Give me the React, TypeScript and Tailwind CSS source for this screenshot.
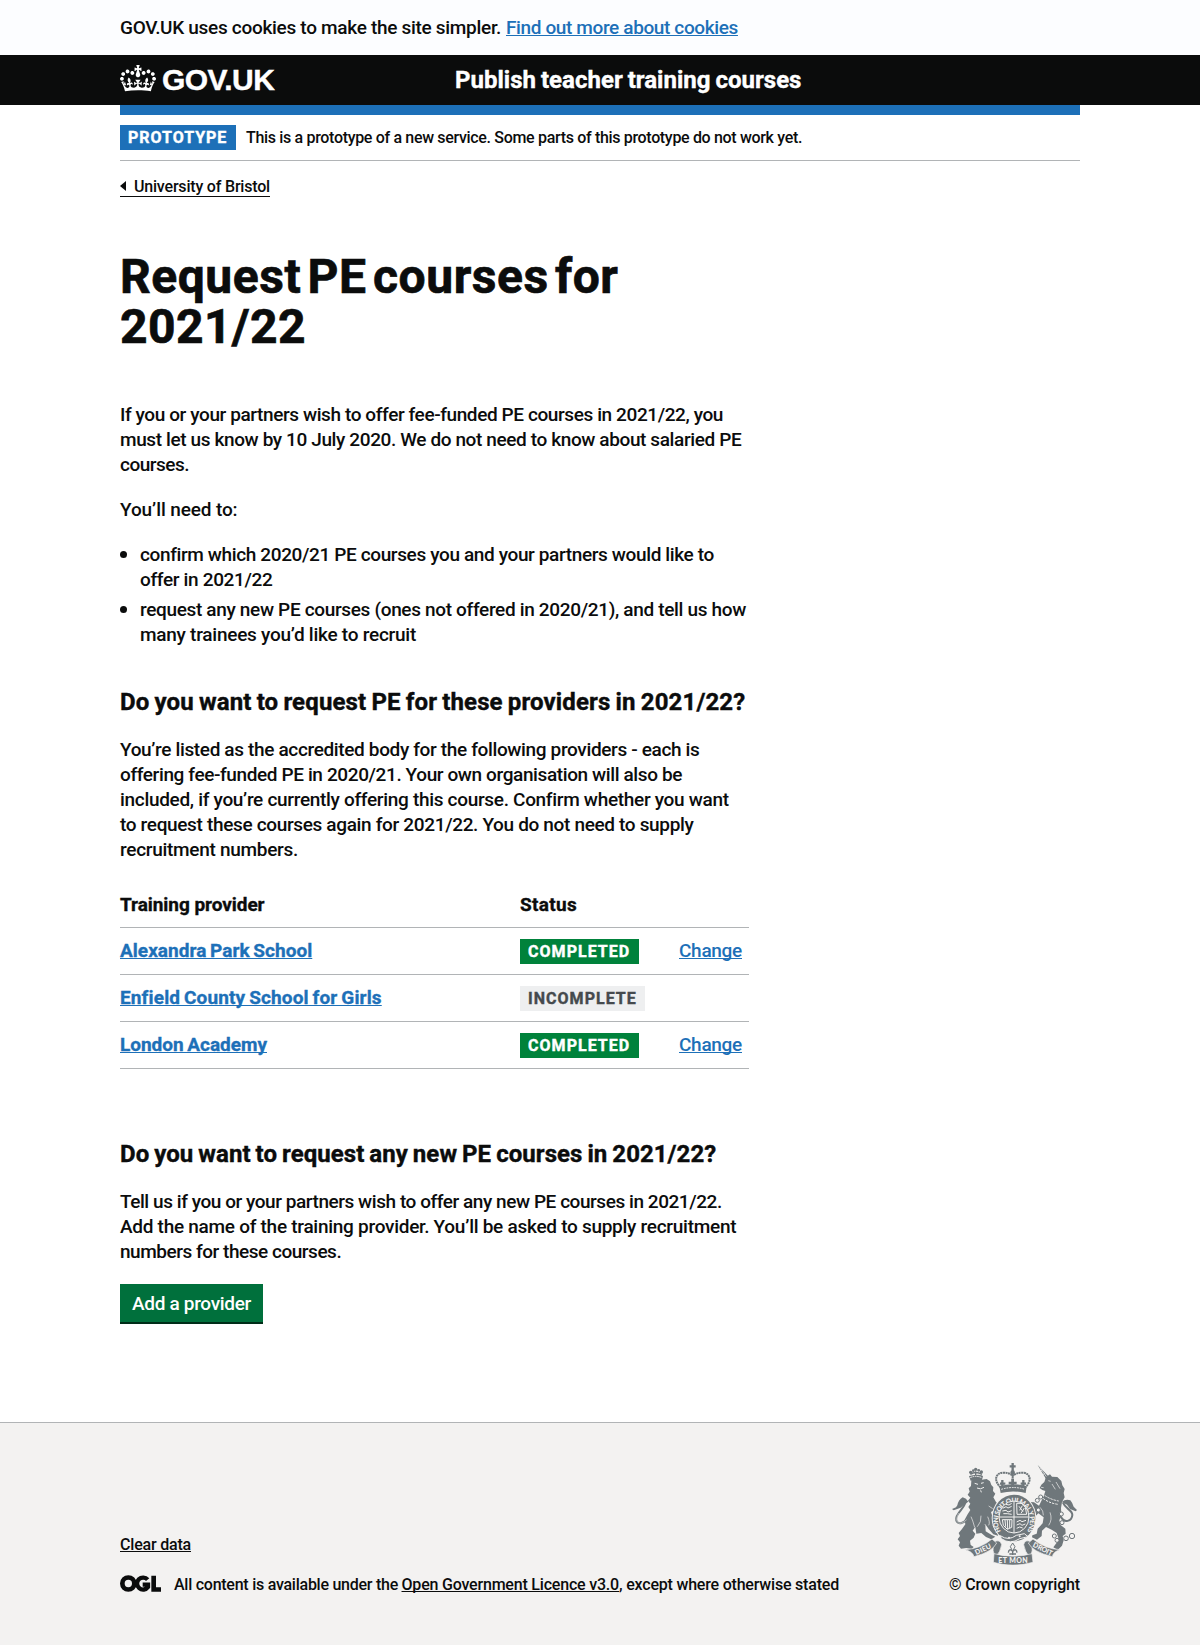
import type { ReactNode } from "react";

type Line = { text: string; tracking: string };

function Lines({ lines }: { lines: Line[] }) {
  return (
    <>
      {lines.map((line) => (
        <span key={line.text} className={`block whitespace-nowrap ${line.tracking}`}>
          {line.text}
        </span>
      ))}
    </>
  );
}

function Link({ children, className }: { children: ReactNode; className: string }) {
  return (
    <a
      href="#"
      className={`whitespace-nowrap underline decoration-1 underline-offset-1 [text-decoration-skip-ink:none] ${className}`}
    >
      {children}
    </a>
  );
}

function Crown() {
  return (
    <svg viewBox="0 0 132 97" className="h-[26.5px] w-9 fill-white" aria-hidden="true">
      <path d="M25 30.2c3.5 1.5 7.7-.2 9.1-3.7 1.5-3.6-.2-7.8-3.9-9.2-3.6-1.4-7.6.3-9.1 3.9-1.4 3.5.3 7.5 3.9 9zM9 39.5c3.6 1.5 7.8-.2 9.2-3.7 1.5-3.6-.2-7.8-3.9-9.1-3.6-1.5-7.6.2-9.1 3.8-1.4 3.5.3 7.5 3.8 9zM4.4 57.2c3.5 1.5 7.7-.2 9.1-3.8 1.5-3.6-.2-7.7-3.9-9.1-3.5-1.5-7.6.3-9.1 3.8-1.4 3.5.3 7.6 3.9 9.1zm38.3-21.4c3.5 1.5 7.7-.2 9.1-3.8 1.5-3.6-.2-7.7-3.9-9.1-3.6-1.5-7.6.3-9.1 3.8-1.3 3.6.4 7.7 3.9 9.1zm64.4-5.6c-3.6 1.5-7.8-.2-9.1-3.7-1.5-3.6.2-7.8 3.8-9.2 3.6-1.4 7.7.3 9.2 3.9 1.3 3.5-.4 7.5-3.9 9zm15.9 9.3c-3.6 1.5-7.7-.2-9.1-3.7-1.5-3.6.2-7.8 3.7-9.1 3.6-1.5 7.7.2 9.2 3.8 1.5 3.5-.3 7.5-3.8 9zm4.7 17.7c-3.6 1.5-7.8-.2-9.2-3.8-1.5-3.6.2-7.7 3.9-9.1 3.6-1.5 7.7.3 9.2 3.8 1.3 3.5-.4 7.6-3.9 9.1zM89.3 35.8c-3.6 1.5-7.8-.2-9.2-3.8-1.4-3.6.2-7.7 3.9-9.1 3.6-1.5 7.7.3 9.2 3.8 1.4 3.6-.3 7.7-3.9 9.1zM69.7 17.7l8.9 4.7V9.3l-8.9 2.8c-.2-.3-.5-.6-.9-.9L72.4 0H59.6l3.5 11.2c-.3.3-.6.5-.9.9l-8.8-2.8v13.1l8.8-4.7c.3.3.6.7.9.9l-5 15.4v.1c-.2.8-.4 1.6-.4 2.4 0 4.1 3.1 7.5 7 8.1h.2c.3 0 .7.1 1 .1.4 0 .7 0 1-.1h.2c4-.6 7.1-4.1 7.1-8.1 0-.8-.1-1.7-.4-2.4V34l-5.1-15.4c.4-.2.7-.6 1-.9zM66 92.8c16.9 0 32.8 1.1 47.1 3.2 4-16.9 8.9-26.7 14-33.5l-9.6-3.4c1 4.9 1.1 7.2 0 10.2-1.5-1.4-3-4.3-4.2-8.7L108.6 76c2.8-2 5-3.2 7.5-3.3-4.4 9.4-10 11.9-13.6 11.2-4.3-.8-6.3-4.6-5.6-7.9 1-4.7 5.7-5.9 8-.5 4.3-8.7-3-11.4-7.6-8.8 7.1-7.2 7.9-13.5 2.1-21.1-8 6.1-8.1 12.3-4.5 20.8-4.7-5.4-12.1-2.5-9.5 6.2 3.4-5.2 7.9-2 7.2 3.1-.6 4.3-6.4 7.8-13.5 7.2-10.3-.9-10.9-8-11.2-13.8 2.5-.5 7.1 1.8 11 7.3L80.2 60c-4.1 4.4-8 5.3-12.3 5.4 1.4-4.4 8-11.6 8-11.6H55.5s6.4 7.2 7.9 11.6c-4.2-.1-8-1-12.3-5.4l1.4 16.4c3.9-5.5 8.5-7.7 10.9-7.3-.3 5.8-.9 12.8-11.1 13.8-7.2.6-12.9-2.9-13.5-7.2-.7-5 3.8-8.3 7.1-3.1 2.7-8.7-4.6-11.6-9.4-6.2 3.7-8.5 3.6-14.7-4.6-20.8-5.8 7.6-5 13.9 2.2 21.1-4.7-2.6-11.9.1-7.7 8.8 2.3-5.5 7.1-4.2 8.1.5.7 3.3-1.3 7.1-5.7 7.9-3.5.7-9-1.8-13.5-11.2 2.5.1 4.7 1.3 7.5 3.3l-4.7-15.4c-1.2 4.4-2.7 7.2-4.3 8.7-1.1-3-.9-5.3 0-10.2l-9.5 3.4c5 6.9 9.9 16.7 14 33.5 14.8-2.1 30.8-3.2 47.7-3.2z" />
    </svg>
  );
}

function OglLogo() {
  return (
    <svg
      viewBox="0 0 123 51"
      className="h-[17px] w-[41px]"
      fill="none"
      stroke="#0b0c0c"
      strokeWidth="14"
      aria-label="Open Government Licence"
    >
      <circle cx="25" cy="25.5" r="18" />
      <path d="M83 14 A18 18 0 1 0 84 36 V29 H68" strokeWidth="13" />
      <path d="M101 2 V43.5 H123" />
    </svg>
  );
}

const INK = "#6f777b";
const PAPER = "#f3f2f1";

function Crest() {
  return (
    <svg viewBox="36 159 375 306" className="h-[102px] w-[125px]" aria-hidden="true">
      <defs>
        <path id="garter" d="M184 366 A48 55 0 1 1 260 366" />
      </defs>

      {/* Imperial crown */}
      <g fill="none" stroke={INK}>
        <path d="M218 159 V184 M209 169 H227" strokeWidth="7" />
        <circle cx="218" cy="188" r="7" fill={INK} stroke="none" />
        <path d="M182 232 C160 212 166 188 190 188 C206 188 214 193 218 198 C222 193 232 188 247 188 C271 188 277 212 256 232" strokeWidth="6" strokeDasharray="6 1.5" />
        <path d="M218 194 V228" strokeWidth="6" strokeDasharray="5 1.5" />
        <path d="M218 206 V232 M206 219 H230" strokeWidth="8" />
        <path d="M187 210 V234 M180 221 H196 M250 210 V234 M242 221 H258" strokeWidth="7" />
      </g>
      <path d="M178 229 Q219 216 260 229 L257 249 Q219 240 182 249 Z" fill={INK} />
      <path d="M184 238 Q219 227 255 238" fill="none" stroke={PAPER} strokeWidth="3" strokeDasharray="5 3" />

      {/* Lion */}
      <g fill={INK}>
        <path d="M92 212 L87 198 Q125 190 129 199 L125 212 Z" />
        <circle cx="107" cy="178" r="5" />
        <circle cx="92" cy="187" r="5" />
        <circle cx="124" cy="186" r="5" />
        <circle cx="100" cy="182" r="4" />
        <circle cx="116" cy="181" r="4" />
        <path d="M94 212 Q108 203 125 209 L140 207 L150 214 L154 225 L160 232 L159 243 L166 251 L160 262 L168 276 L178 286 L176 301 L167 309 L160 302 L153 306 L158 322 L164 336 L158 347 L166 358 L176 365 L174 377 L160 373 L146 357 L136 343 L121 347 L105 352 L98 362 L106 371 L101 383 L90 392 L92 405 L101 411 L95 417 L79 414 L63 416 L56 407 L60 397 L53 388 L60 378 L56 369 L66 357 L76 343 L74 329 L82 314 L91 300 L85 291 L91 281 L84 272 L91 263 L83 254 L89 245 L86 235 L93 228 Z" />
        <path d="M106 351 Q124 338 136 344 L137 364 L155 375 L166 380 L154 388 L138 381 L124 369 L109 371 Z" />
        <path d="M52 286 Q55 270 68 262 Q79 265 85 275 Q72 282 62 293 L41 301 L36 297 L48 292 Z" />
      </g>
      <path d="M91 193 Q107 182 126 193 M107 184 V197" fill="none" stroke={INK} strokeWidth="4" />
      <path d="M80 329 C53 354 40 331 56 309 C68 293 75 286 78 273" fill="none" stroke={INK} strokeWidth="6" />
      <path d="M80 329 C53 354 42 331 57 309" fill="none" stroke={PAPER} strokeWidth="1.5" />
      <g fill="none" stroke={PAPER} strokeWidth="3">
        <path d="M91 203 Q107 195 126 203" strokeDasharray="5 2" />
        <path d="M104 220 L114 223 M123 220 L131 218 M111 234 Q121 240 132 232 M122 241 L124 247" />
        <path d="M123 317 Q125 336 112 350 M143 320 Q151 338 146 346 M146 288 L158 296 M104 352 Q98 330 93 320" strokeWidth="2" />
      </g>

      {/* Unicorn */}
      <g fill={INK}>
        <path d="M293 165 L325 199 L318 207 Z" />
        <path d="M318 201 L330 193 L336 200 L352 201 L364 213 L367 226 L374 237 L371 249 L374 262 L366 276 L363 294 L364 316 L358 331 L362 345 L376 356 L377 371 L368 378 L371 391 L366 407 L353 420 L340 412 L350 398 L355 384 L350 369 L335 359 L318 351 L306 362 L305 378 L291 389 L276 382 L277 376 L290 371 L293 356 L308 340 L311 322 L295 310 L287 318 L275 302 L266 287 L270 276 L282 277 L297 287 L304 273 L311 259 L316 243 L307 240 L299 234 L304 224 L313 216 Z" />
        <path d="M365 276 Q377 266 391 271 Q397 278 401 290 L411 300 L407 304 L390 297 L381 284 Z" />
      </g>
      <path d="M360 315 C373 346 396 331 397 315 C398 300 376 297 369 278" fill="none" stroke={INK} strokeWidth="6" />
      <path d="M300 173 L319 200 M325 212 L332 214 M303 232 L311 233 M300 183 L306 181 M309 194 L315 190" fill="none" stroke={PAPER} strokeWidth="2" />
      <path d="M306 250 Q327 268 356 273 M302 259 Q323 279 354 283" fill="none" stroke={PAPER} strokeWidth="3" strokeDasharray="7 3" />
      <path d="M336 222 L346 238 M348 216 L360 236 M330 307 Q338 329 326 346 M300 292 Q311 302 310 316" fill="none" stroke={PAPER} strokeWidth="2" />
      <g fill={PAPER} stroke={INK} strokeWidth="3">
        <circle cx="302" cy="261" r="6" />
        <circle cx="292" cy="271" r="6" />
        <circle cx="295" cy="300" r="6" />
        <circle cx="364" cy="312" r="6" />
        <circle cx="366" cy="338" r="6" />
        <circle cx="343" cy="378" r="6" />
        <circle cx="351" cy="391" r="6" />
        <circle cx="378" cy="385" r="7" />
        <circle cx="396" cy="378" r="8" />
      </g>

      {/* Garter and shield */}
      <ellipse cx="222" cy="324" rx="67" ry="73" fill={PAPER} />
      <ellipse cx="222" cy="324" rx="64" ry="70" fill={INK} />
      <text fill={PAPER} className="font-[Lato] text-[20px] font-black">
        <textPath href="#garter" startOffset="2" textLength="238">HONI SOIT QUI MAL Y PENSE</textPath>
      </text>
      <ellipse cx="222" cy="321" rx="45" ry="48" fill={INK} stroke={PAPER} strokeWidth="3" />
      <path d="M176 321 H268 M222 273 V369" stroke={PAPER} strokeWidth="3" />
      <g fill="none" stroke={PAPER} strokeWidth="3">
        <path d="M188 295 L198 290 L204 294 L215 289 M187 303 L198 301 L204 306 L215 302 M190 311 L202 311 L215 313 M198 283 L207 285 L215 280" />
        <path d="M230 280 H246 L256 292 L260 313 H231 Z M237 289 L249 305 M247 287 L239 301 M253 294 L243 310" />
        <path d="M187 329 L190 346 L202 358 L215 352 L216 329 Z M195 330 L197 350 M202 330 L203 357 M209 330 V354" />
        <path d="M230 336 L240 331 L246 335 L258 331 M230 345 L240 341 L246 346 L256 342 M230 355 L239 351 L248 354" />
      </g>
      <path d="M181 377 Q205 394 229 376 L253 371 L264 380 L239 386 Q211 405 184 386 Z" fill={INK} stroke={PAPER} strokeWidth="3" />
      <circle cx="207" cy="383" r="3" fill={PAPER} />
      <circle cx="239" cy="379" r="3" fill={PAPER} />

      {/* Motto ribbon */}
      <g fill={INK} stroke={PAPER} strokeWidth="2">
        <path d="M163 395 Q180 387 185 404 Q181 426 168 440 Q153 425 163 395 Z" />
        <path d="M272 395 Q255 387 251 404 Q255 426 268 440 Q283 425 272 395 Z" />
        <path d="M74 419 Q121 417 156 387 L170 399 Q158 425 102 440 Q98 424 74 419 Z" />
        <path d="M361 419 Q314 417 279 387 L265 399 Q277 425 337 440 Q340 424 361 419 Z" />
        <path d="M162 431 Q218 446 276 431 L279 457 Q218 474 160 457 Z" />
      </g>
      <path d="M218 401 V435 M205 428 Q207 413 218 424 Q229 413 231 428 M208 432 H228" fill="none" stroke={INK} strokeWidth="4" />
      <path d="M218 399 L225 410 L218 424 L211 410 Z" fill={PAPER} stroke={INK} strokeWidth="3" />
      <g fill={PAPER} className="font-[Lato] text-[21px] font-black">
        <text x="175" y="459" textLength="88">ET MON</text>
        <text transform="translate(109 435) rotate(-25)" textLength="51">DIEU</text>
        <text transform="translate(277 409) rotate(27)" textLength="63">DROIT</text>
      </g>
    </svg>
  );
}

const intro: Line[] = [
  { text: "If you or your partners wish to offer fee-funded PE courses in 2021/22, you", tracking: "tracking-[-0.402px]" },
  { text: "must let us know by 10 July 2020. We do not need to know about salaried PE", tracking: "tracking-[-0.385px]" },
  { text: "courses.", tracking: "tracking-[-0.5px]" },
];

const bullets: Line[][] = [
  [
    { text: "confirm which 2020/21 PE courses you and your partners would like to", tracking: "tracking-[-0.372px]" },
    { text: "offer in 2021/22", tracking: "tracking-[-0.34px]" },
  ],
  [
    { text: "request any new PE courses (ones not offered in 2020/21), and tell us how", tracking: "tracking-[-0.335px]" },
    { text: "many trainees you’d like to recruit", tracking: "tracking-[-0.256px]" },
  ],
];

const accredited: Line[] = [
  { text: "You’re listed as the accredited body for the following providers - each is", tracking: "tracking-[-0.352px]" },
  { text: "offering fee-funded PE in 2020/21. Your own organisation will also be", tracking: "tracking-[-0.387px]" },
  { text: "included, if you’re currently offering this course. Confirm whether you want", tracking: "tracking-[-0.312px]" },
  { text: "to request these courses again for 2021/22. You do not need to supply", tracking: "tracking-[-0.339px]" },
  { text: "recruitment numbers.", tracking: "tracking-[-0.288px]" },
];

const newCourses: Line[] = [
  { text: "Tell us if you or your partners wish to offer any new PE courses in 2021/22.", tracking: "tracking-[-0.447px]" },
  { text: "Add the name of the training provider. You’ll be asked to supply recruitment", tracking: "tracking-[-0.277px]" },
  { text: "numbers for these courses.", tracking: "tracking-[-0.47px]" },
];

const providers = [
  { name: "Alexandra Park School", tracking: "tracking-[0.03px]", done: true },
  { name: "Enfield County School for Girls", tracking: "tracking-[0.14px]", done: false },
  { name: "London Academy", tracking: "tracking-[-0.02px]", done: true },
];

export default function App() {
  return (
    <div className="flex min-h-[1645px] flex-col bg-white font-[Roboto,sans-serif] text-[19px] leading-[25px] font-medium text-[#0b0c0c]">
      <div className="h-[55px] bg-[#fcfdff]">
        <p className="mx-auto flex w-[960px] gap-[5px] pt-[15px] whitespace-nowrap">
          <span className="tracking-[-0.303px]">GOV.UK uses cookies to make the site simpler.</span>
          <Link className="text-[#1d70b8] tracking-[-0.371px]">Find out more about cookies</Link>
        </p>
      </div>

      <header className="h-[50px] bg-[#0b0c0c] text-white">
        <div className="mx-auto flex w-[960px]">
          <div className="flex w-[335px] pt-2.5">
            <Crown />
            <span className="ml-1.5 font-['Liberation_Sans',sans-serif] text-[30px] leading-[30px] font-bold tracking-[-0.55px] [-webkit-text-stroke:0.4px_white]">
              GOV.UK
            </span>
          </div>
          <span className="pt-2.5 text-2xl leading-[30px] font-bold tracking-[0.015px] whitespace-nowrap [word-spacing:-1px] [-webkit-text-stroke:0.4px]">
            Publish teacher training courses
          </span>
        </div>
      </header>

      <main className="mx-auto w-[960px] flex-1">
        <div className="h-2.5 bg-[#1d70b8]" />
        <div className="flex h-[46px] items-center gap-2.5 border-b border-[#b1b4b6] text-base leading-5">
          <strong className="h-[25px] w-[116px] bg-[#1d70b8] pt-[3px] pl-2 font-bold tracking-[0.97px] text-white [-webkit-text-stroke:0.4px]">
            PROTOTYPE
          </strong>
          <span className="pt-px tracking-[-0.329px] whitespace-nowrap">
            This is a prototype of a new service. Some parts of this prototype do not work yet.
          </span>
        </div>

        <a href="#" className="mt-[15px] flex h-[21px] w-[150px] items-center border-b border-[#0b0c0c] text-base leading-5">
          <span className="mr-2 h-0 w-0 border-y-5 border-r-6 border-y-transparent border-r-[#0b0c0c]" />
          <span className="mt-0.5 tracking-[-0.193px] whitespace-nowrap">University of Bristol</span>
        </a>

        <h1 className="mt-[55px] text-5xl leading-[50px] font-bold [word-spacing:-6px] [-webkit-text-stroke:0.7px]">
          <Lines
            lines={[
              { text: "Request PE courses for", tracking: "tracking-[0.53px]" },
              { text: "2021/22", tracking: "tracking-[0.422px]" },
            ]}
          />
        </h1>

        <div className="w-[629px]">
          <p className="mt-[50px]">
            <Lines lines={intro} />
          </p>
          <p className="mt-5 tracking-[-0.121px]">You’ll need to:</p>
          <ul className="mt-5 flex flex-col gap-[5px]">
            {bullets.map((lines) => (
              <li key={lines[0].text} className="flex gap-[13px]">
                <span className="mt-[9px] h-[7px] w-[7px] rounded-full bg-[#0b0c0c]" />
                <span>
                  <Lines lines={lines} />
                </span>
              </li>
            ))}
          </ul>

          <h2 className="mt-10 text-2xl leading-[30px] font-bold tracking-[0.14px] whitespace-nowrap [word-spacing:-1px] [-webkit-text-stroke:0.4px]">
            Do you want to request PE for these providers in 2021/22?
          </h2>
          <p className="mt-5">
            <Lines lines={accredited} />
          </p>

          <div className="mt-5">
            <div className="flex h-[46px] border-b border-[#b1b4b6] pt-2.5 font-bold [-webkit-text-stroke:0.35px]">
              <span className="w-[400px] tracking-[-0.053px]">Training provider</span>
              <span className="tracking-[0.31px]">Status</span>
            </div>
            {providers.map((p) => (
              <div key={p.name} className="flex h-[47px] border-b border-[#b1b4b6] pt-2.5">
                <span className="w-[400px] font-bold [word-spacing:-1px] [-webkit-text-stroke:0.35px]">
                  <Link className={`text-[#1d70b8] ${p.tracking}`}>{p.name}</Link>
                </span>
                <span className="w-[159px] pt-px">
                  {p.done ? (
                    <strong className="block h-[25px] w-[119px] bg-[#00823b] pt-[3px] pl-2 text-base leading-5 font-bold tracking-[1.04px] text-white [-webkit-text-stroke:0.4px]">
                      COMPLETED
                    </strong>
                  ) : (
                    <strong className="block h-[25px] w-[125px] bg-[#eeeff0] pt-[3px] pl-2 text-base leading-5 font-bold tracking-[1.03px] text-[#454a4d] [-webkit-text-stroke:0.4px]">
                      INCOMPLETE
                    </strong>
                  )}
                </span>
                {p.done && <Link className="text-[#1d70b8] tracking-[-0.289px]">Change</Link>}
              </div>
            ))}
          </div>

          <h2 className="mt-[70px] text-2xl leading-[30px] font-bold tracking-[0.05px] whitespace-nowrap [word-spacing:-1px] [-webkit-text-stroke:0.4px]">
            Do you want to request any new PE courses in 2021/22?
          </h2>
          <p className="mt-5">
            <Lines lines={newCourses} />
          </p>
          <button className="mt-5 block h-10 w-[143px] border-b-2 border-[#002d18] bg-[#00703c] pl-3 text-left tracking-[-0.313px] text-white">
            Add a provider
          </button>
        </div>
      </main>

      <footer className="h-[223px] border-t border-[#b1b4b6] bg-[#f3f2f1] text-base leading-5">
        <div className="mx-auto flex w-[960px] justify-between">
          <div className="pt-[112px]">
            <Link className="tracking-[-0.195px]">Clear data</Link>
            <div className="mt-5 flex">
              <OglLogo />
              <p className="ml-[13px] flex whitespace-nowrap">
                <span className="mr-[3.5px] tracking-[-0.254px]">All content is available under the</span>
                <Link className="tracking-[-0.198px]">Open Government Licence v3.0</Link>
                <span className="tracking-[-0.198px]">, except where otherwise stated</span>
              </p>
            </div>
          </div>
          <div className="flex w-[131px] flex-col items-center pt-10">
            <Crest />
            <span className="mt-[10px] tracking-[-0.146px] whitespace-nowrap">© Crown copyright</span>
          </div>
        </div>
      </footer>
    </div>
  );
}
